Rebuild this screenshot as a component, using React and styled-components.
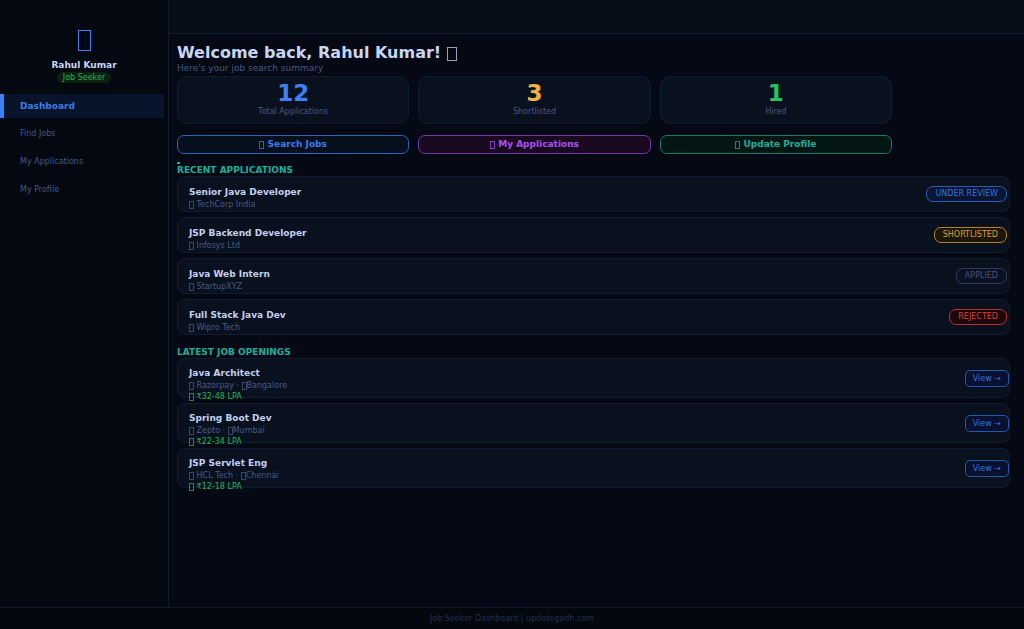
import React from "react";
import styled, { createGlobalStyle } from "styled-components";

const GlobalStyle = createGlobalStyle`
  * { box-sizing: border-box; }
  body { margin: 0; background: #050913; }
  body, button { font-family: "DejaVu Sans", sans-serif; }
  h1, h2, h3, p, ul { margin: 0; padding: 0; }
  ul { list-style: none; }
`;

const Page = styled.div`
  min-height: 100vh;
  display: flex;
  flex-direction: column;
  color: #c8d6f5;
`;

const Body = styled.div`
  flex: 1;
  display: flex;
`;

const Sidebar = styled.aside`
  flex: 0 0 169px;
  background: #040811;
  border-right: 1px solid #0f1a2c;
  padding-top: 30px;
`;

const Profile = styled.div`
  display: flex;
  flex-direction: column;
  align-items: center;
  margin-bottom: 11px;
`;

const Avatar = styled.span`
  width: 13px;
  height: 21px;
  border: 1px solid #3b82f6;
`;

const Glyph = styled.span`
  display: inline-block;
  width: ${(p) => p.$w || 5}px;
  height: ${(p) => p.$h || 8}px;
  border: 1px solid currentColor;
  opacity: 0.75;
  vertical-align: ${(p) => (p.$h > 10 ? "-3px" : "-2px")};
`;

const UserName = styled.p`
  font-size: 9px;
  font-weight: bold;
  line-height: 12px;
  margin-top: 8px;
`;

const Role = styled.span`
  background: #0d2110;
  color: #20b455;
  font-size: 8px;
  line-height: 11px;
  border-radius: 6px;
  padding: 0 6px;
  margin-top: 1px;
`;

const NavList = styled.ul`
  display: flex;
  flex-direction: column;
  gap: 4px;
  margin-right: 4px;
`;

const NavLink = styled.a`
  display: block;
  text-decoration: none;
  line-height: 24px;
  padding-left: 16px;
  border-left: 4px solid ${(p) => (p.$active ? "#3b82f6" : "transparent")};
  background: ${(p) => (p.$active ? "#08142a" : "transparent")};
  color: ${(p) => (p.$active ? "#3a7cec" : "#435b86")};
  font-size: ${(p) => (p.$active ? 9 : 8)}px;
  font-weight: ${(p) => (p.$active ? "bold" : "normal")};
`;

const Content = styled.div`
  flex: 1;
  min-width: 0;
`;

const TopBar = styled.header`
  height: 34px;
  background: #070d19;
  border-bottom: 1px solid #0f1a2c;
`;

const Main = styled.main`
  padding: 9px 14px 16px 8px;
`;

const Title = styled.h1`
  font-size: 16px;
  line-height: 20px;
`;

const Subtitle = styled.p`
  font-size: 9px;
  line-height: 11px;
  color: #435b86;
  margin-bottom: 2px;
`;

const Trio = styled.div`
  display: grid;
  grid-template-columns: repeat(3, 1fr);
  gap: 9px;
  max-width: 715px;
  margin-bottom: ${(p) => p.$after}px;
`;

const Stat = styled.div`
  height: 48px;
  background: #0a111e;
  border: 1px solid #101d30;
  border-radius: 10px;
  text-align: center;
  padding-top: 4px;
`;

const StatValue = styled.p`
  font-size: 23px;
  font-weight: bold;
  line-height: 24px;
  color: ${(p) => p.$color};
`;

const StatLabel = styled.p`
  font-size: 8px;
  line-height: 13px;
  color: #435b86;
`;

const Action = styled.button`
  height: 19px;
  padding: 0;
  background: ${(p) => p.$bg};
  border: 1px solid ${(p) => p.$line};
  border-radius: 7px;
  color: ${(p) => p.$color};
  font-size: 9px;
  font-weight: bold;
  line-height: 17px;
`;

const Mark = styled.span`
  display: block;
  width: 3px;
  height: 2px;
  background: #14b8a6;
`;

const SectionTitle = styled.h2`
  font-size: 9px;
  line-height: 12px;
  color: #17b09d;
  text-transform: uppercase;
`;

const List = styled.ul`
  display: flex;
  flex-direction: column;
  gap: 5px;
  margin-bottom: 11px;
`;

const Row = styled.li`
  display: flex;
  justify-content: space-between;
  height: ${(p) => p.$h}px;
  background: #0a111e;
  border: 1px solid #101d30;
  border-radius: 8px;
  padding: 0 ${(p) => p.$right}px 0 11px;
`;

const RowText = styled.div`
  padding-top: ${(p) => p.$top}px;
`;

const RowTitle = styled.h3`
  font-size: 9px;
  line-height: 13px;
  color: #c2d0f0;
`;

const RowLine = styled.p`
  font-size: 8px;
  line-height: ${(p) => (p.$pay ? 10 : 12)}px;
  color: ${(p) => (p.$pay ? "#20b455" : "#435b86")};
`;

const Badge = styled.span`
  align-self: center;
  font-size: 8px;
  line-height: 14px;
  padding: 0 8px;
  border-radius: 7px;
  border: 1px solid ${(p) => p.$line};
  color: ${(p) => p.$color};
  background: ${(p) => p.$bg};
`;

const ViewButton = styled.button`
  align-self: center;
  font-size: 8px;
  line-height: 15px;
  padding: 0 7px;
  border-radius: 5px;
  border: 1px solid #2458ab;
  color: #3575dc;
  background: #081230;
`;

const Footer = styled.footer`
  height: 22px;
  background: #03070e;
  border-top: 1px solid #0f1a2c;
  text-align: center;
  font-size: 8px;
  line-height: 21px;
  color: #20314f;
`;

const nav = ["Dashboard", "Find Jobs", "My Applications", "My Profile"];

const stats = [
  { value: 12, label: "Total Applications", color: "#3b82f6" },
  { value: 3, label: "Shortlisted", color: "#f5b03e" },
  { value: 1, label: "Hired", color: "#22c55e" },
];

const actions = [
  { label: "Search Jobs", color: "#3a7cec", line: "#2b63bd", bg: "#06101d" },
  { label: "My Applications", color: "#a851f2", line: "#7635a8", bg: "#190a1f" },
  { label: "Update Profile", color: "#17b09d", line: "#107d70", bg: "#031613" },
];

const applications = [
  { title: "Senior Java Developer", company: "TechCorp India", status: "UNDER REVIEW", color: "#3672d8", line: "#2a5fb8", bg: "#0a1634" },
  { title: "JSP Backend Developer", company: "Infosys Ltd", status: "SHORTLISTED", color: "#dc9f35", line: "#b5812a", bg: "#1d1708" },
  { title: "Java Web Intern", company: "StartupXYZ", status: "APPLIED", color: "#465677", line: "#2f3c5a", bg: "#0a1122" },
  { title: "Full Stack Java Dev", company: "Wipro Tech", status: "REJECTED", color: "#d83f41", line: "#b03235", bg: "#1f0609" },
];

const jobs = [
  { title: "Java Architect", company: "Razorpay", city: "Bangalore", pay: "₹32-48 LPA" },
  { title: "Spring Boot Dev", company: "Zepto", city: "Mumbai", pay: "₹22-34 LPA" },
  { title: "JSP Servlet Eng", company: "HCL Tech", city: "Chennai", pay: "₹12-18 LPA" },
];

export default function App() {
  return (
    <Page>
      <GlobalStyle />
      <Body>
        <Sidebar>
          <Profile>
            <Avatar />
            <UserName>Rahul Kumar</UserName>
            <Role>Job Seeker</Role>
          </Profile>
          <nav>
            <NavList>
              {nav.map((item, i) => (
                <li key={item}>
                  <NavLink href="#" $active={i === 0}>{item}</NavLink>
                </li>
              ))}
            </NavList>
          </nav>
        </Sidebar>
        <Content>
          <TopBar />
          <Main>
            <Title>
              Welcome back, Rahul Kumar! <Glyph $w={10} $h={14} />
            </Title>
            <Subtitle>Here's your job search summary</Subtitle>
            <Trio $after={11}>
              {stats.map((s) => (
                <Stat key={s.label}>
                  <StatValue $color={s.color}>{s.value}</StatValue>
                  <StatLabel>{s.label}</StatLabel>
                </Stat>
              ))}
            </Trio>
            <Trio $after={8}>
              {actions.map((a) => (
                <Action key={a.label} $color={a.color} $line={a.line} $bg={a.bg}>
                  <Glyph /> {a.label}
                </Action>
              ))}
            </Trio>
            <Mark />
            <SectionTitle>Recent Applications</SectionTitle>
            <List>
              {applications.map((a) => (
                <Row key={a.title} $h={36} $right={2}>
                  <RowText $top={9}>
                    <RowTitle>{a.title}</RowTitle>
                    <RowLine><Glyph /> {a.company}</RowLine>
                  </RowText>
                  <Badge $color={a.color} $line={a.line} $bg={a.bg}>{a.status}</Badge>
                </Row>
              ))}
            </List>
            <SectionTitle>Latest Job Openings</SectionTitle>
            <List>
              {jobs.map((j) => (
                <Row key={j.title} $h={40} $right={0}>
                  <RowText $top={8}>
                    <RowTitle>{j.title}</RowTitle>
                    <RowLine><Glyph /> {j.company} · <Glyph />{j.city}</RowLine>
                    <RowLine $pay><Glyph /> {j.pay}</RowLine>
                  </RowText>
                  <ViewButton>View →</ViewButton>
                </Row>
              ))}
            </List>
          </Main>
        </Content>
      </Body>
      <Footer>Job Seeker Dashboard | updategadh.com</Footer>
    </Page>
  );
}
